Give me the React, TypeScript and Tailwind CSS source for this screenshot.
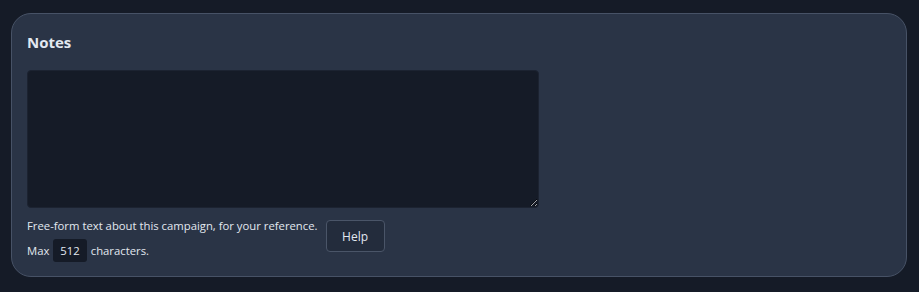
import React from 'react'

export default function App() {
  return (
    <div
      className="min-h-[292px] w-[919px] bg-[#151b27] pl-[11px] pt-[13px]"
      style={{ fontFamily: '"Open Sans", "Noto Sans", sans-serif' }}
    >
      <div className="h-[264px] w-[896px] rounded-[20px] border border-[#475266] bg-[#2a3446] px-[15px] pt-[18px]">
        <h2 className="text-[15px] font-bold leading-5 text-[#e2e8f0]">Notes</h2>

        <textarea className="mt-[18px] block h-[138px] w-[512px] resize rounded-[4px] border border-[#1c2331] bg-[#151b27] p-2 text-sm text-gray-200 outline-none" />

        <div className="mt-[8px] flex items-start gap-2">
          <div className="text-[11.3px] leading-5 text-[#e2e8f0]">
            <p>Free-form text about this campaign, for your reference.</p>
            <p className="mt-[3px] flex items-center gap-[4px]">
              Max
              <span className="rounded-[3px] bg-[#151b27] px-[7px] leading-[23px]">512</span>
              characters.
            </p>
          </div>
          <button className="mt-[4px] h-[32px] w-[59px] rounded-[4px] border border-[#4a5568] bg-[#232c3c] pt-[2px] text-[12px] text-[#e2e8f0]">
            Help
          </button>
        </div>
      </div>
    </div>
  )
}
